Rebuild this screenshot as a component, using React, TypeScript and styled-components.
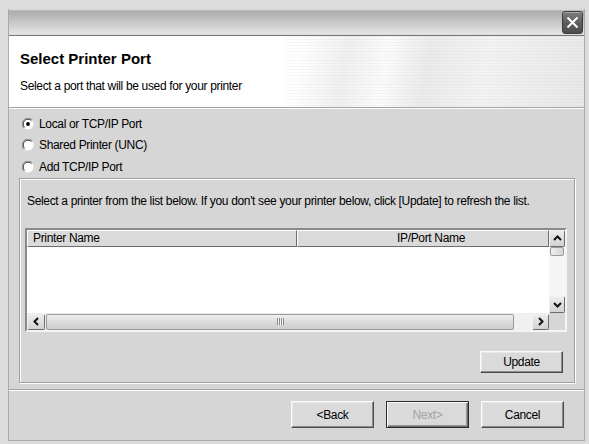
import * as React from 'react';
import styled, { createGlobalStyle, css } from 'styled-components';

const TEXT_FONT = `'Liberation Sans', Arial, sans-serif`;
const BODY_BG = '#d6d6d6';

const GlobalStyle = createGlobalStyle`
  html, body {
    margin: 0;
    padding: 0;
    background: #dcdcdc;
  }
  body {
    font-family: ${TEXT_FONT};
    font-size: 12px;
    letter-spacing: -0.34px;
    color: #000;
  }
`;

const Screen = styled.div`
  width: 589px;
  height: 444px;
  box-sizing: border-box;
  padding: 9px 4px 3px 8px;
`;

const Window = styled.div`
  height: 100%;
  box-sizing: border-box;
  display: flex;
  flex-direction: column;
  background: ${BODY_BG};
  border: 1px solid #ababab;
  border-top: none;
`;

const TitleBar = styled.div`
  flex: none;
  height: 27px;
  box-sizing: border-box;
  display: flex;
  justify-content: flex-end;
  align-items: flex-start;
  padding: 2px 1px 0 0;
  border-bottom: 1px solid #767676;
  background: linear-gradient(
    to bottom,
    #e8e8e8 0,
    #adadad 2px,
    #b6b6b6 25%,
    #cecece 60%,
    #e3e3e3 92%,
    #dadada 100%
  );
`;

const CloseButton = styled.div`
  width: 21px;
  height: 23px;
  box-sizing: border-box;
  display: flex;
  align-items: center;
  justify-content: center;
  border-radius: 3px;
  border: 1px solid #3e3e3e;
  background: linear-gradient(to bottom, #7e7e7e, #5c5c5c 55%, #4c4c4c);
  box-shadow: inset 0 1px 0 rgba(255, 255, 255, 0.35);
`;

const Header = styled.div`
  flex: none;
  height: 72px;
  box-sizing: border-box;
  padding: 14px 0 0 11px;
  border-bottom: 1px solid #a2a2a2;
  background:
    repeating-linear-gradient(to bottom, rgba(0, 0, 0, 0.03) 0 1px, transparent 1px 3px) right / 52% 100% no-repeat,
    linear-gradient(100deg, #fff 0%, #fff 50%, #f0f0f0 58%, #fbfbfb 65%, #ebebeb 72%, #f3f3f3 82%, #e8e8e8 100%);
`;

const Title = styled.div`
  font-weight: bold;
  font-size: 15px;
  letter-spacing: 0;
  line-height: 18px;
  margin-bottom: 10px;
`;

const Subtitle = styled.div`
  line-height: 16px;
`;

const Body = styled.div`
  flex: 1;
  min-height: 0;
  display: flex;
  flex-direction: column;
  border-top: 1px solid #fff;
  border-bottom: 1px solid #a2a2a2;
`;

const RadioList = styled.div`
  display: flex;
  flex-direction: column;
  padding: 4px 0 0 13px;
`;

const RadioRow = styled.label`
  height: 21.5px;
  display: flex;
  align-items: center;
  gap: 5px;
`;

const GroupBox = styled.div`
  margin: 0 9px 6px 10px;
  flex: 1;
  display: flex;
  flex-direction: column;
  padding: 14px 7px 7px 5px;
  border: 1px solid #a0a0a0;
  box-shadow: inset 1px 1px 0 #fff, 1px 1px 0 #fff;
`;

const Hint = styled.div`
  line-height: 16px;
  white-space: nowrap;
  margin: 0 0 19px 2px;
`;

const ListView = styled.div`
  height: 104px;
  flex: none;
  box-sizing: border-box;
  display: grid;
  grid-template-columns: 1fr 16px;
  grid-template-rows: 17px 1fr 17px;
  border: 2px solid;
  border-color: #8a8a8a #f4f4f4 #f4f4f4 #8a8a8a;
  background: #fff;
`;

const ListHeader = styled.div`
  grid-column: 1;
  grid-row: 1;
  display: flex;
  background: #dadada;
`;

const HeaderCell = styled.div<{ $width?: number; $center?: boolean }>`
  ${p => (p.$width ? css`width: ${p.$width}px;` : css`flex: 1;`)}
  box-sizing: border-box;
  display: flex;
  align-items: center;
  justify-content: ${p => (p.$center ? 'center' : 'flex-start')};
  padding: ${p => (p.$center ? '0 0 0 16px' : '0 0 0 5px')};
  border-top: 1px solid #fff;
  border-left: 1px solid #fff;
  border-right: 1px solid #6e6e6e;
  border-bottom: 1px solid #6e6e6e;
  line-height: 14px;
`;

const ListBody = styled.div`
  grid-column: 1;
  grid-row: 2;
  background: #fff;
`;

const VScroll = styled.div`
  grid-column: 2;
  grid-row: 1 / span 2;
  display: flex;
  flex-direction: column;
  background: #f5f5f5;
`;

const HScroll = styled.div`
  grid-column: 1;
  grid-row: 3;
  display: flex;
  background: #f0f0f0;
  border-top: 1px solid #ececec;
  box-sizing: border-box;
`;

const Corner = styled.div`
  grid-column: 2;
  grid-row: 3;
  background: ${BODY_BG};
`;

const ScrollButton = styled.div<{ $w: number; $h: number }>`
  width: ${p => p.$w}px;
  height: ${p => p.$h}px;
  flex: none;
  box-sizing: border-box;
  display: flex;
  align-items: center;
  justify-content: center;
  border: 1px solid;
  border-color: #f2f2f2 #6c6c6c #6c6c6c #f2f2f2;
  border-radius: 2px;
  background: linear-gradient(to bottom, #ececec, #d2d2d2);
`;

const VThumb = styled.div`
  height: 9px;
  margin: 0 1px;
  box-sizing: border-box;
  border: 1px solid #9c9c9c;
  border-radius: 2px;
  background: linear-gradient(to right, #eeeeee, #d6d6d6);
`;

const VTrack = styled.div`
  flex: 1;
`;

const HThumb = styled.div`
  flex: 1;
  margin: 0 18px 0 1px;
  box-sizing: border-box;
  display: flex;
  align-items: center;
  justify-content: center;
  border: 1px solid #9a9a9a;
  border-radius: 2px;
  background: linear-gradient(to bottom, #efefef, #dcdcdc 50%, #cecece);
`;

const Grip = styled.div`
  width: 7px;
  height: 7px;
  background: repeating-linear-gradient(to right, #8a8a8a 0 1px, #f4f4f4 1px 2px);
`;

const UpdateRow = styled.div`
  display: flex;
  justify-content: flex-end;
  margin-top: 19px;
  padding-right: 4px;
`;

const Button = styled.div<{ $tall?: boolean; $isDefault?: boolean; $disabled?: boolean }>`
  width: 83px;
  height: ${p => (p.$tall ? 27 : 22)}px;
  box-sizing: border-box;
  display: flex;
  align-items: center;
  justify-content: center;
  background: #dadada;
  border: 1px solid;
  border-color: #fafafa #4a4a4a #4a4a4a #fafafa;
  box-shadow: inset -1px -1px 0 #8c8c8c, inset 1px 1px 0 #e8e8e8;
  color: ${p => (p.$disabled ? '#a4a4a4' : '#000')};
  ${p =>
    p.$isDefault &&
    css`
      border-color: #2a2a2a;
      box-shadow: inset 1px 1px 0 #fafafa, inset -1px -1px 0 #6a6a6a, inset -2px -2px 0 #9a9a9a;
    `}
`;

const Footer = styled.div`
  flex: none;
  height: 50px;
  box-sizing: border-box;
  display: flex;
  justify-content: flex-end;
  align-items: flex-start;
  gap: 12px;
  padding: 10px 20px 0 0;
  border-top: 1px solid #fff;
`;

const Radio = ({ checked }: { checked?: boolean }) => (
  <svg width="12" height="12" viewBox="0 0 12 12">
    <circle cx="6" cy="6" r="5.5" fill="#fff" />
    <path d="M1.8 10.2 A5.9 5.9 0 0 1 10.2 1.8" stroke="#8a8a8a" strokeWidth="1" fill="none" />
    <path d="M2.6 9.4 A4.8 4.8 0 0 1 9.4 2.6" stroke="#3a3a3a" strokeWidth="1" fill="none" />
    {checked && <circle cx="6" cy="6" r="1.9" fill="#000" />}
  </svg>
);

const Chevron = ({ dir }: { dir: 'up' | 'down' | 'left' | 'right' }) => {
  const points = {
    up: '1,6 4.5,2.5 8,6',
    down: '1,3 4.5,6.5 8,3',
    left: '6,1 2.5,4.5 6,8',
    right: '3,1 6.5,4.5 3,8',
  }[dir];
  return (
    <svg width="9" height="9" viewBox="0 0 9 9">
      <polyline points={points} fill="none" stroke="#111" strokeWidth="2" />
    </svg>
  );
};

const App = () => (
  <Screen>
    <GlobalStyle />
    <Window>
      <TitleBar>
        <CloseButton>
          <svg width="13" height="13" viewBox="0 0 13 13">
            <path d="M1.5 1.5 L11.5 11.5 M11.5 1.5 L1.5 11.5" stroke="#fff" strokeWidth="2" />
          </svg>
        </CloseButton>
      </TitleBar>
      <Header>
        <Title>Select Printer Port</Title>
        <Subtitle>Select a port that will be used for your printer</Subtitle>
      </Header>
      <Body>
        <RadioList>
          <RadioRow><Radio checked />Local or TCP/IP Port</RadioRow>
          <RadioRow><Radio />Shared Printer (UNC)</RadioRow>
          <RadioRow><Radio />Add TCP/IP Port</RadioRow>
        </RadioList>
        <GroupBox>
          <Hint>
            Select a printer from the list below. If you don't see your printer below, click [Update] to refresh the list.
          </Hint>
          <ListView>
            <ListHeader>
              <HeaderCell $width={270}>Printer Name</HeaderCell>
              <HeaderCell $center>IP/Port Name</HeaderCell>
            </ListHeader>
            <ListBody />
            <VScroll>
              <ScrollButton $w={16} $h={17}><Chevron dir="up" /></ScrollButton>
              <VThumb />
              <VTrack />
              <ScrollButton $w={16} $h={17}><Chevron dir="down" /></ScrollButton>
            </VScroll>
            <HScroll>
              <ScrollButton $w={18} $h={16}><Chevron dir="left" /></ScrollButton>
              <HThumb><Grip /></HThumb>
              <ScrollButton $w={17} $h={16}><Chevron dir="right" /></ScrollButton>
            </HScroll>
            <Corner />
          </ListView>
          <UpdateRow>
            <Button>Update</Button>
          </UpdateRow>
        </GroupBox>
      </Body>
      <Footer>
        <Button $tall>&lt;Back</Button>
        <Button $tall $isDefault $disabled>Next&gt;</Button>
        <Button $tall>Cancel</Button>
      </Footer>
    </Window>
  </Screen>
);

export default App;
